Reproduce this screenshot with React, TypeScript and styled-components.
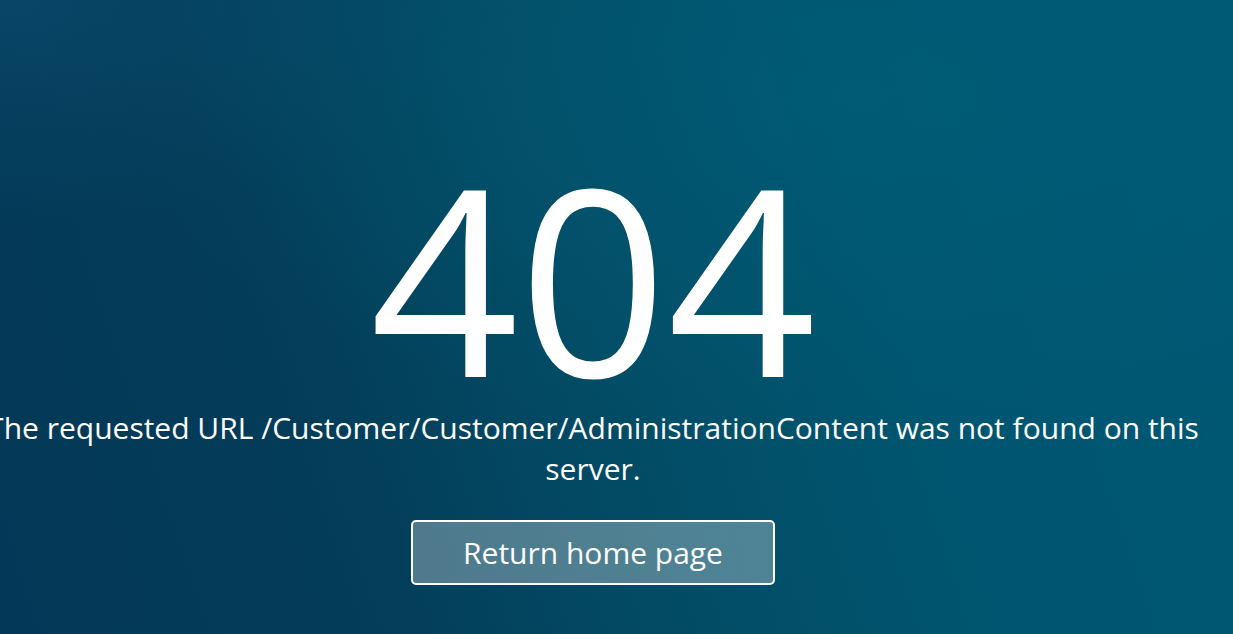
import React from "react";
import styled, { createGlobalStyle } from "styled-components";

const GlobalStyle = createGlobalStyle`
  html, body {
    margin: 0;
    padding: 0;
    height: 100%;
  }
  body {
    font-family: "Open Sans", "Noto Sans", sans-serif;
    background: #033a56;
  }
  #root {
    height: 100%;
  }
`;

const Page = styled.main`
  position: relative;
  width: 100%;
  height: 634px;
  overflow: hidden;
  color: #ffffff;
  background:
    radial-gradient(ellipse 40% 35% at 0% 0%, rgba(10, 76, 112, 0.6) 0%, rgba(10, 76, 112, 0) 100%),
    radial-gradient(ellipse 60% 55% at 70% 15%, rgba(0, 96, 122, 0.45) 0%, rgba(0, 96, 122, 0) 100%),
    linear-gradient(72deg, #043858 0%, #033c58 25%, #034a64 45%, #005670 70%, #005874 100%);
`;

const Content = styled.section`
  display: flex;
  flex-direction: column;
  align-items: center;
  width: 1226px;
  margin-left: -20px;
  padding-top: 166px;
  text-align: center;
`;

const Code = styled.h1`
  margin: 0;
  font-size: 260px;
  line-height: 220px;
  font-weight: 400;
  letter-spacing: 0;
`;

const Message = styled.p`
  margin: 21px 0 0;
  font-size: 30px;
  line-height: 41px;
  font-weight: 400;
`;

const HomeButton = styled.a`
  display: flex;
  align-items: center;
  justify-content: center;
  box-sizing: border-box;
  width: 364px;
  height: 65px;
  margin-top: 31px;
  border: 2px solid #ffffff;
  border-radius: 5px;
  background: rgba(255, 255, 255, 0.3);
  color: #ffffff;
  font-size: 30px;
  text-decoration: none;
  cursor: pointer;
`;

export default function App() {
  return (
    <>
      <GlobalStyle />
      <Page>
        <Content>
          <Code>404</Code>
          <Message>
            The requested URL /Customer/Customer/AdministrationContent was not found on this server.
          </Message>
          <HomeButton href="#">Return home page</HomeButton>
        </Content>
      </Page>
    </>
  );
}
